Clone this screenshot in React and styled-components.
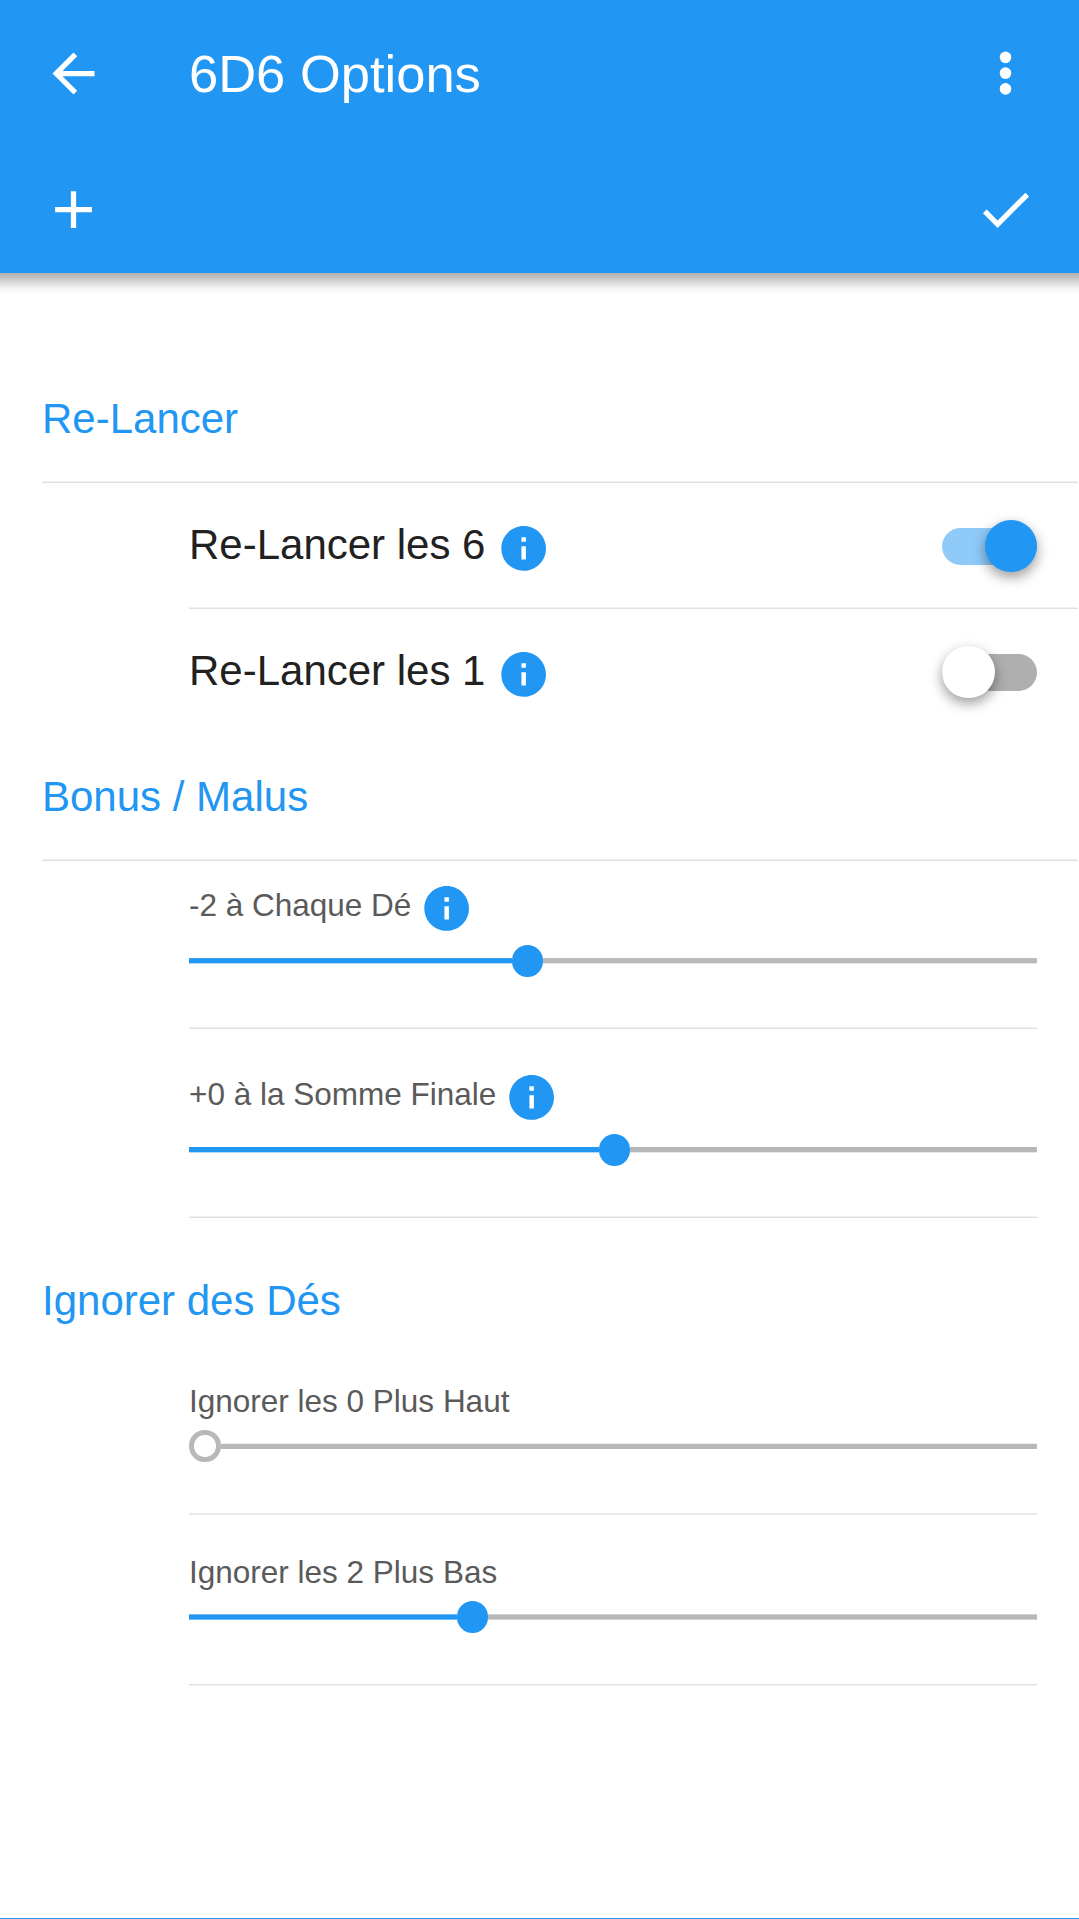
import React from "react";
import styled, { createGlobalStyle } from "styled-components";

const BLUE = "#2196f3";

const GlobalStyle = createGlobalStyle`
  *, *::before, *::after { box-sizing: border-box; }
  body {
    margin: 0;
    background: #fff;
    font-family: "Liberation Sans", Arial, sans-serif;
    color: #212121;
  }
`;

const Page = styled.div`
  display: flex;
  flex-direction: column;
  width: 1079px;
  height: 1919px;
  overflow: hidden;
  background: #fff;
  border-bottom: 1px solid ${BLUE};
`;

const Header = styled.header`
  flex: none;
  background: ${BLUE};
  color: #fff;
`;

const Toolbar = styled.div`
  display: flex;
  align-items: center;
  height: ${(p) => p.$height}px;
  padding: 0 42px ${(p) => p.$bottom || 0}px;
`;

const IconButton = styled.button`
  display: flex;
  flex: none;
  width: 63px;
  height: 63px;
  padding: 0;
  border: 0;
  background: none;
  color: inherit;
`;

const Glyph = styled.svg`
  display: block;
  width: 100%;
  height: 100%;
  fill: currentColor;
`;

const Title = styled.h1`
  flex: 1;
  margin: 0 0 0 84px;
  font-size: 52.5px;
  font-weight: 400;
  line-height: 60px;
`;

const Spacer = styled.div`
  flex: 1;
`;

const HeaderShadow = styled.div`
  flex: none;
  height: 21px;
  background: linear-gradient(
    to bottom,
    rgba(0, 0, 0, 0.31) 0%,
    rgba(0, 0, 0, 0.23) 25%,
    rgba(0, 0, 0, 0.13) 50%,
    rgba(0, 0, 0, 0.045) 75%,
    rgba(0, 0, 0, 0) 100%
  );
`;

const Content = styled.main`
  padding-top: 62px;
`;

const SectionTitle = styled.h2`
  display: flex;
  align-items: center;
  height: ${(p) => p.$height}px;
  margin: ${(p) => p.$top || 0}px 0 0 42px;
  padding-top: ${(p) => p.$drop || 0}px;
  color: ${BLUE};
  font-size: 42px;
  font-weight: 400;
  line-height: 48px;
`;

const DIVIDER_TONES = {
  lower: ["#f1f1f1", "#dfdfdf"],
  even: ["#e9e9e9", "#e9e9e9"],
  upper: ["#dfdfdf", "#f3f3f3"],
};

const Divider = styled.div`
  height: 2px;
  margin: 0 ${(p) => p.$right}px 0 ${(p) => p.$left}px;
  background: linear-gradient(
    to bottom,
    ${(p) => DIVIDER_TONES[p.$tone || "lower"][0]} 50%,
    ${(p) => DIVIDER_TONES[p.$tone || "lower"][1]} 50%
  );
`;

const SwitchRow = styled.div`
  display: flex;
  align-items: center;
  height: 124px;
  padding: 0 42px 0 189px;
  font-size: 42px;
  line-height: 48px;
`;

const RowLabel = styled.span`
  white-space: pre;
`;

const InfoBadge = styled.span`
  display: block;
  flex: none;
  width: 46px;
  height: 46px;
  margin: ${(p) => p.$top}px 0 0 ${(p) => p.$left}px;
  color: ${BLUE};
`;

const SwitchTrack = styled.div`
  display: flex;
  align-items: center;
  justify-content: ${(p) => (p.$on ? "flex-end" : "flex-start")};
  width: 95px;
  height: 37px;
  margin-top: 2px;
  margin-left: auto;
  border-radius: 19px;
  background: ${(p) => (p.$on ? "#90caf9" : "#b0afaf")};
`;

const SwitchKnob = styled.div`
  flex: none;
  width: 52.5px;
  height: 52.5px;
  border-radius: 50%;
  background: ${(p) => (p.$on ? BLUE : "#fff")};
  box-shadow: 0 5.25px 13px rgba(0, 0, 0, 0.4);
`;

const SliderRow = styled.div`
  display: flex;
  flex-direction: column;
  height: ${(p) => p.$height}px;
  padding: ${(p) => p.$top}px 42px 0 189px;
`;

const SliderLabel = styled.div`
  display: flex;
  align-items: center;
  height: 45px;
  color: #5a5a5a;
  font-size: 31.5px;
  line-height: 36px;
`;

const SliderTrack = styled.div`
  display: flex;
  align-items: center;
  height: 32px;
  margin-top: ${(p) => p.$gap}px;
`;

const Rail = styled.div`
  --tone: ${(p) => (p.$filled ? "33, 150, 243" : "184, 184, 184")};
  flex: ${(p) => (p.$filled ? "none" : "1")};
  height: 6px;
  background: linear-gradient(
    to bottom,
    rgba(var(--tone), ${(p) => p.$edges[0]}) 1px,
    rgb(var(--tone)) 1px,
    rgb(var(--tone)) 5px,
    rgba(var(--tone), ${(p) => p.$edges[1]}) 5px
  );
`;

const Thumb = styled.div`
  flex: none;
  width: 31.5px;
  height: 31.5px;
  border-radius: 50%;
  border: 5.25px solid ${(p) => (p.$empty ? "#b8b8b8" : BLUE)};
  background: ${(p) => (p.$empty ? "#fff" : BLUE)};
`;

function InfoIcon({ left, top }) {
  return (
    <InfoBadge $left={left} $top={top}>
      <Glyph viewBox="1.85 1.97 20.6 20.6">
        <path d="M12 2C6.48 2 2 6.48 2 12s4.48 10 10 10 10-4.48 10-10S17.52 2 12 2zm1 15h-2v-6h2v6zm0-8h-2V7h2v2z" />
      </Glyph>
    </InfoBadge>
  );
}

function SwitchItem({ label, on }) {
  return (
    <SwitchRow>
      <RowLabel>{label}</RowLabel>
      <InfoIcon left={16} top={7} />
      <SwitchTrack $on={on}>
        <SwitchKnob $on={on} />
      </SwitchTrack>
    </SwitchRow>
  );
}

function SliderItem({ label, filled, info, top, gap, height, edges }) {
  return (
    <SliderRow $top={top} $height={height}>
      <SliderLabel>
        <RowLabel>{label}</RowLabel>
        {info && <InfoIcon left={13} top={8} />}
      </SliderLabel>
      <SliderTrack $gap={gap}>
        <Rail $filled $edges={edges} style={{ width: filled }} />
        <Thumb $empty={filled === 0} />
        <Rail $edges={edges} />
      </SliderTrack>
    </SliderRow>
  );
}

export default function App() {
  return (
    <>
      <GlobalStyle />
      <Page>
        <Header>
          <Toolbar $height={147}>
            <IconButton aria-label="Retour">
              <Glyph viewBox="0 0 24 24">
                <path d="M20 11H7.83l5.59-5.59L12 4l-8 8 8 8 1.41-1.41L7.83 13H20v-2z" />
              </Glyph>
            </IconButton>
            <Title>6D6 Options</Title>
            <IconButton aria-label="Menu">
              <Glyph viewBox="0 0 24 24">
                <circle cx="12" cy="5.85" r="2.2" />
                <circle cx="12" cy="11.85" r="2.2" />
                <circle cx="12" cy="17.85" r="2.2" />
              </Glyph>
            </IconButton>
          </Toolbar>
          <Toolbar $height={126} $bottom={1}>
            <IconButton aria-label="Ajouter">
              <Glyph viewBox="0 0 24 24">
                <path d="M19 13h-6v6h-2v-6H5v-2h6V5h2v6h6v2z" />
              </Glyph>
            </IconButton>
            <Spacer />
            <IconButton aria-label="Valider">
              <Glyph viewBox="0 0 24 24">
                <path d="M9 16.17L4.83 12l-1.42 1.41L9 19 21 7l-1.41-1.41z" />
              </Glyph>
            </IconButton>
          </Toolbar>
        </Header>
        <HeaderShadow />
        <Content>
          <SectionTitle $height={125}>Re-Lancer</SectionTitle>
          <Divider $left={42} $right={1} />
          <SwitchItem label="Re-Lancer les 6" on />
          <Divider $left={189} $right={1} />
          <SwitchItem label="Re-Lancer les 1" on={false} />
          <SectionTitle $height={126} $drop={2}>Bonus / Malus</SectionTitle>
          <Divider $left={42} $right={1} />
          <SliderItem label="-2 à Chaque Dé" filled={322.5} info top={21} gap={18} height={166} edges={[0.9, 0.35]} />
          <Divider $left={189} $right={42} />
          <SliderItem label="+0 à la Somme Finale" filled={409.5} info top={42} gap={18} height={187} edges={[1, 0.35]} />
          <Divider $left={189} $right={42} />
          <SectionTitle $height={126} $top={20}>Ignorer des Dés</SectionTitle>
          <SliderItem label="Ignorer les 0 Plus Haut" filled={0} top={14} gap={7} height={149} edges={[0.25, 1]} />
          <Divider $left={189} $right={42} $tone="even" />
          <SliderItem label="Ignorer les 2 Plus Bas" filled={267.5} top={34} gap={7} height={169} edges={[0.65, 0.65]} />
          <Divider $left={189} $right={42} $tone="upper" />
        </Content>
      </Page>
    </>
  );
}
